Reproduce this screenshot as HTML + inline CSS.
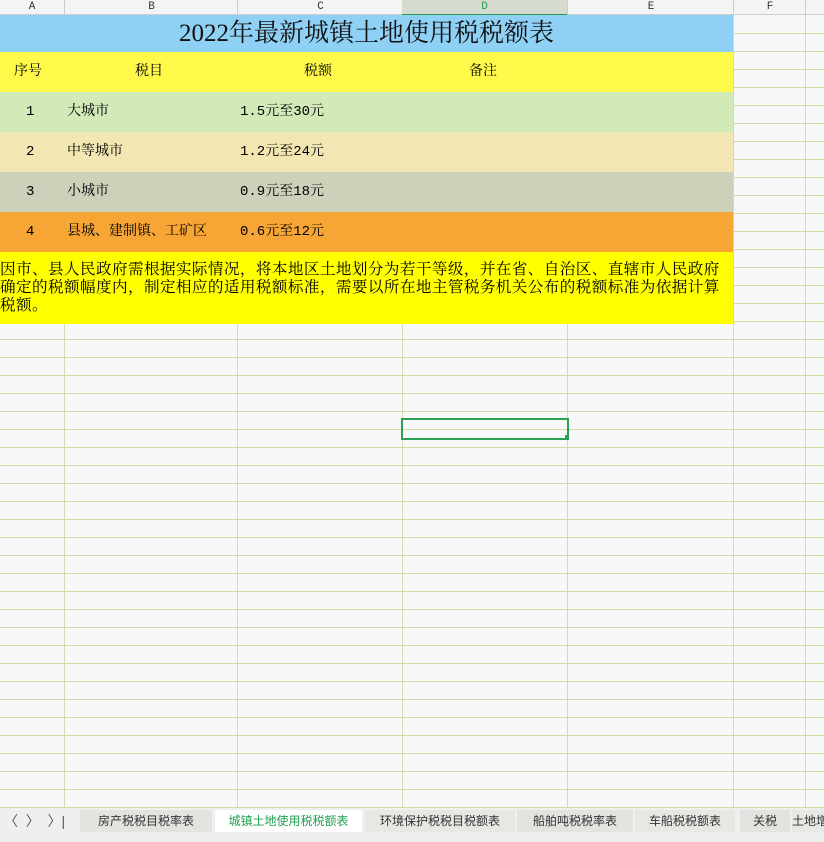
<!DOCTYPE html><html><head><meta charset="utf-8"><style>
body{margin:0;width:824px;height:842px;overflow:hidden;background:#f7f8fa;font-family:"Liberation Mono","Noto Serif CJK SC",serif;position:relative}
.abs{position:absolute}
.grid{position:absolute;left:0;top:16px;width:824px;height:792px;
background-image:repeating-linear-gradient(to bottom,transparent 0 17px,#d8d8a4 17px 18px);}
.v{position:absolute;top:14px;width:1px;height:794px;background:#d8d8b0}
.hdr{position:absolute;top:0;height:14px;background:#f4f4f4;border-bottom:1px solid #ccc;font-size:11px;text-align:center;line-height:14px;color:#333}
.row{position:absolute;left:0;width:733px;font-size:14px}
.row span{position:absolute}
.tab{position:absolute;top:810px;height:22px;line-height:22px;font-size:12px;color:#333;font-family:"Liberation Sans","Noto Sans CJK SC",sans-serif}
</style></head><body>
<div class="grid"></div>
<div class="v" style="left:64px"></div><div class="v" style="left:237px"></div><div class="v" style="left:402px"></div><div class="v" style="left:567px"></div><div class="v" style="left:733px"></div><div class="v" style="left:805px"></div>
<div class="hdr" style="left:0;width:64px">A</div>
<div class="hdr" style="left:64px;width:173px;border-left:1px solid #ccc">B</div>
<div class="hdr" style="left:237px;width:165px;border-left:1px solid #ccc">C</div>
<div class="hdr" style="left:402px;width:165px;background:#d5dccf;color:#2a9a4a;border-bottom:2px solid #2a9a4a">D</div>
<div class="hdr" style="left:567px;width:166px;border-left:1px solid #ccc">E</div>
<div class="hdr" style="left:733px;width:72px;border-left:1px solid #ccc">F</div>
<div class="hdr" style="left:805px;width:19px;border-left:1px solid #ccc"></div>
<div class="row" style="top:15px;height:37px;background:#8fd0f5;text-align:center;font-size:25px;line-height:37px;color:#111;font-family:'Liberation Serif','Noto Serif CJK SC',serif">2022年最新城镇土地使用税税额表</div>
<div class="row" style="top:52px;height:40px;background:#fff94a;line-height:40px"><span style="left:14px">序号</span><span style="left:135px">税目</span><span style="left:304px">税额</span><span style="left:469px">备注</span></div>
<div class="row" style="top:92px;height:40px;background:#d2e9b8;line-height:40px"><span style="left:26px">1</span><span style="left:67px">大城市</span><span style="left:240px">1.5元至30元</span></div>
<div class="row" style="top:132px;height:40px;background:#f2e7b2;line-height:40px"><span style="left:26px">2</span><span style="left:67px">中等城市</span><span style="left:240px">1.2元至24元</span></div>
<div class="row" style="top:172px;height:40px;background:#cbd2b9;line-height:40px"><span style="left:26px">3</span><span style="left:67px">小城市</span><span style="left:240px">0.9元至18元</span></div>
<div class="row" style="top:212px;height:40px;background:#f7a534;line-height:40px"><span style="left:26px">4</span><span style="left:67px">县城、建制镇、工矿区</span><span style="left:240px">0.6元至12元</span></div>
<div class="row" style="top:252px;height:72px;background:#ffff00;line-height:18px;padding-top:9px;box-sizing:border-box;white-space:nowrap;overflow:hidden;font-size:15.6px;letter-spacing:0.4px">因市、县人民政府需根据实际情况，将本地区土地划分为若干等级，并在省、自治区、直辖市人民政府<br>确定的税额幅度内，制定相应的适用税额标准，需要以所在地主管税务机关公布的税额标准为依据计算<br>税额。</div>
<div class="abs" style="left:401px;top:418px;width:164px;height:18px;border:2px solid #2aa050"></div>
<div class="abs" style="left:565px;top:435px;width:4px;height:4px;background:#2aa050"></div>
<div class="abs" style="left:0;top:808px;width:824px;height:34px;background:#eef0f0"></div>
<div class="tab" style="left:4px;font-size:14px;color:#555">〈 &nbsp;〉 &nbsp;〉|</div>
<div class="tab" style="left:80px;width:132px;text-align:center;background:#e2e4e0">房产税税目税率表</div>
<div class="tab" style="left:215px;width:147px;text-align:center;background:#fff;color:#22a050">城镇土地使用税税额表</div>
<div class="tab" style="left:365px;width:150px;text-align:center;background:#e6e8e4">环境保护税税目税额表</div>
<div class="tab" style="left:517px;width:116px;text-align:center;background:#e2e4e0">船舶吨税税率表</div>
<div class="tab" style="left:635px;width:100px;text-align:center;background:#e6e8e4">车船税税额表</div>
<div class="tab" style="left:740px;width:50px;text-align:center;background:#e2e4e0">关税</div>
<div class="tab" style="left:792px;width:40px;background:#e6e8e4">土地增</div>
</body></html>
